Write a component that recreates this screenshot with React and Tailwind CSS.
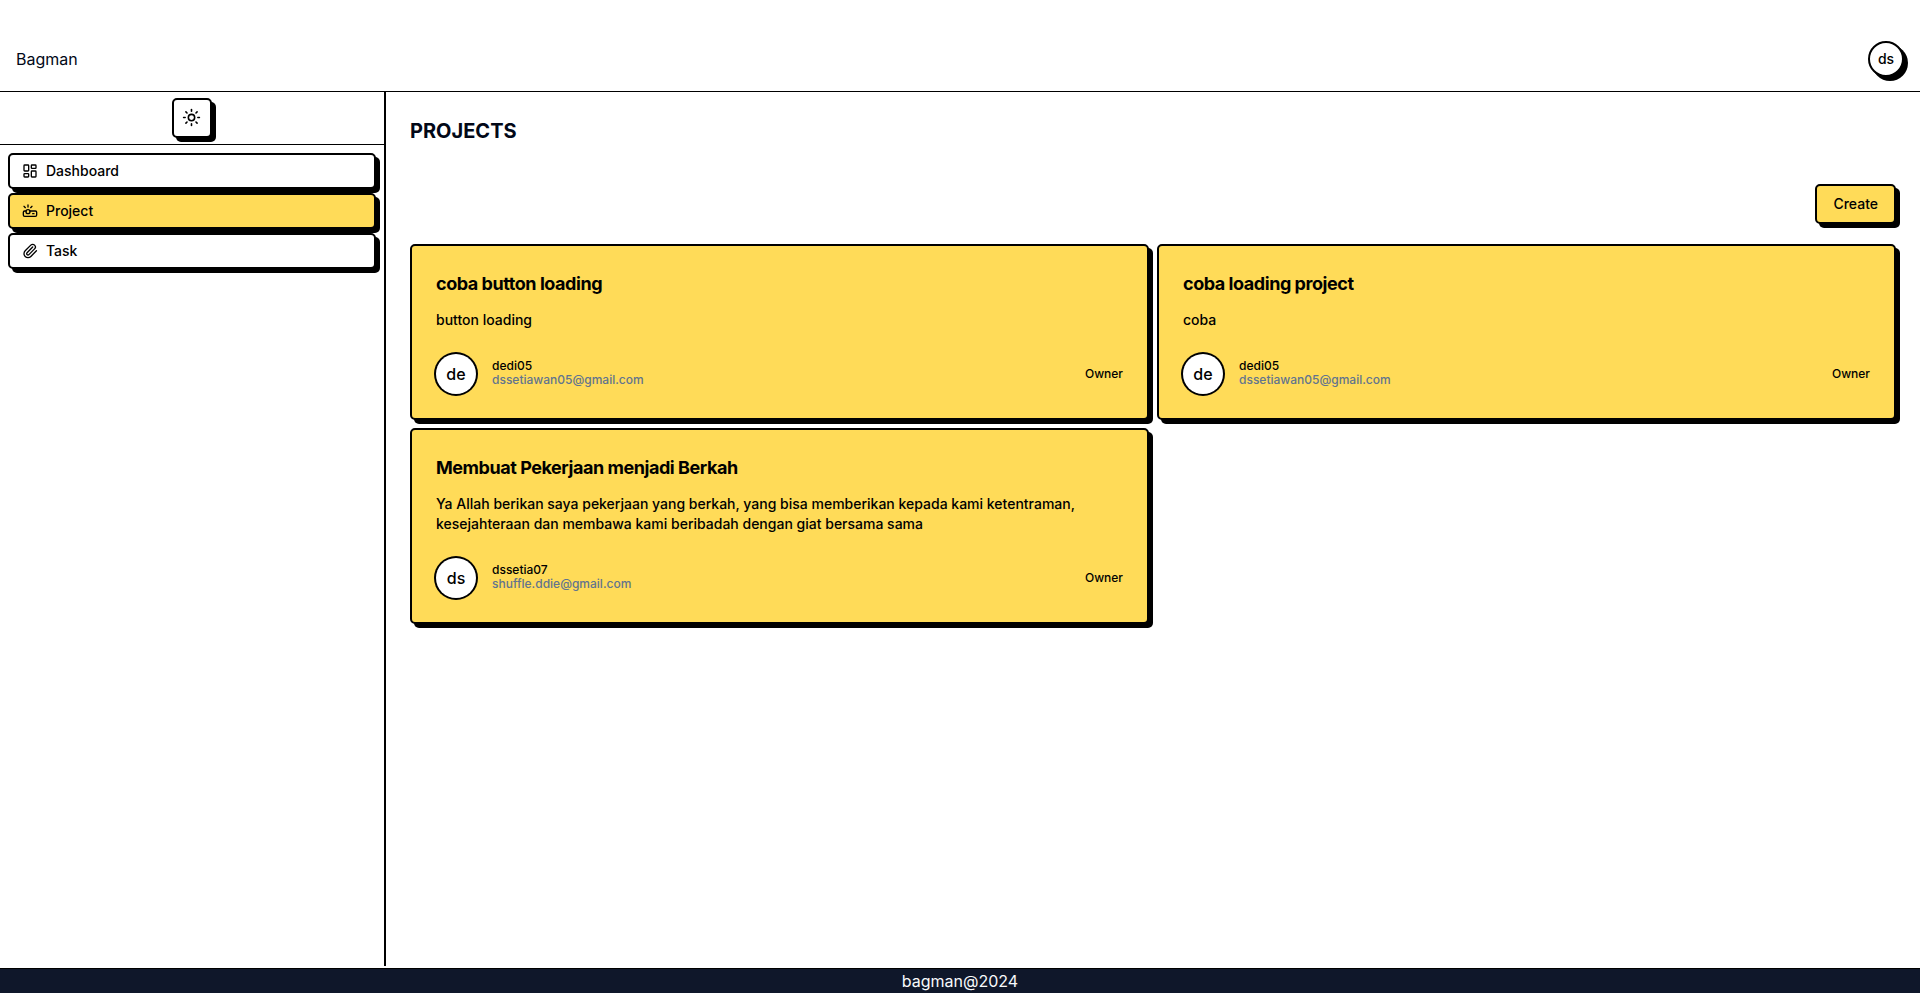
import { LayoutDashboard, Paperclip, Projector, Sun } from "lucide-react";

const navItems = [
  { label: "Dashboard", Icon: LayoutDashboard },
  { label: "Project", Icon: Projector, active: true },
  { label: "Task", Icon: Paperclip },
];

const projects = [
  {
    title: "coba button loading",
    description: "button loading",
    initials: "de",
    name: "dedi05",
    email: "dssetiawan05@gmail.com",
  },
  {
    title: "coba loading project",
    description: "coba",
    initials: "de",
    name: "dedi05",
    email: "dssetiawan05@gmail.com",
  },
  {
    title: "Membuat Pekerjaan menjadi Berkah",
    description:
      "Ya Allah berikan saya pekerjaan yang berkah, yang bisa memberikan kepada kami ketentraman, kesejahteraan dan membawa kami beribadah dengan giat bersama sama",
    initials: "ds",
    name: "dssetia07",
    email: "shuffle.ddie@gmail.com",
  },
];

function Header() {
  return (
    <header className="border-b border-black px-4 pt-[27px]">
      <div className="flex h-16 items-center justify-between">
        <span>Bagman</span>
        <button
          type="button"
          className="size-9 rounded-full border-2 border-black bg-white text-sm font-medium text-black shadow-[4px_4px_0_0_#000]"
        >
          ds
        </button>
      </div>
    </header>
  );
}

function Sidebar() {
  return (
    <aside className="w-[386px] shrink-0 border-r-2 border-black">
      <div className="flex justify-center border-b border-black py-1.5">
        <button
          type="button"
          aria-label="Toggle theme"
          className="flex size-10 items-start rounded-[5px] border-2 border-black bg-white p-2 text-black shadow-[4px_4px_0_0_#000]"
        >
          <Sun className="size-[19px]" />
        </button>
      </div>
      <nav className="flex flex-col gap-1 p-2">
        {navItems.map(({ label, Icon, active }) => (
          <a
            key={label}
            href="#"
            className={`flex h-9 items-center gap-2 rounded-[5px] border-2 border-black px-3 text-sm font-medium text-black shadow-[4px_4px_0_0_#000] ${
              active ? "bg-[#ffdb58]" : "bg-white"
            }`}
          >
            <Icon className="size-4" />
            {label}
          </a>
        ))}
      </nav>
    </aside>
  );
}

function ProjectCard({ project }) {
  return (
    <article className="rounded-[5px] border-2 border-black bg-[#ffdb58] p-6 font-medium text-black shadow-[4px_4px_0_0_#000]">
      <h2 className="text-lg leading-7 font-bold tracking-tight">{project.title}</h2>
      <p className="mt-3 text-sm">{project.description}</p>
      <div className="mt-6 flex items-center justify-between text-xs">
        <div className="flex items-center gap-4">
          <span className="flex size-10 items-center justify-center rounded-full bg-white text-base ring-2 ring-black">
            {project.initials}
          </span>
          <div className="pb-0.5 leading-[14px]">
            <p>{project.name}</p>
            <p className="text-slate-500">{project.email}</p>
          </div>
        </div>
        <span>Owner</span>
      </div>
    </article>
  );
}

export default function App() {
  return (
    <div className="flex min-h-screen flex-col bg-white font-['Inter',sans-serif] text-[#020817]">
      <Header />
      <div className="flex grow">
        <Sidebar />
        <main className="min-w-0 grow p-6">
          <h1 className="text-xl leading-[30px] font-bold">PROJECTS</h1>
          <div className="mt-[38px] flex justify-end">
            <button
              type="button"
              className="h-10 rounded-[5px] border-2 border-black bg-[#ffdb58] px-4 text-sm font-medium text-black shadow-[4px_4px_0_0_#000]"
            >
              Create
            </button>
          </div>
          <div className="mt-5 grid grid-cols-2 items-start gap-2">
            {projects.map((project) => (
              <ProjectCard key={project.title} project={project} />
            ))}
          </div>
        </main>
      </div>
      <footer className="mt-0.5 border-t border-black bg-[#0f172a] text-center text-slate-50">
        bagman@2024
      </footer>
    </div>
  );
}
